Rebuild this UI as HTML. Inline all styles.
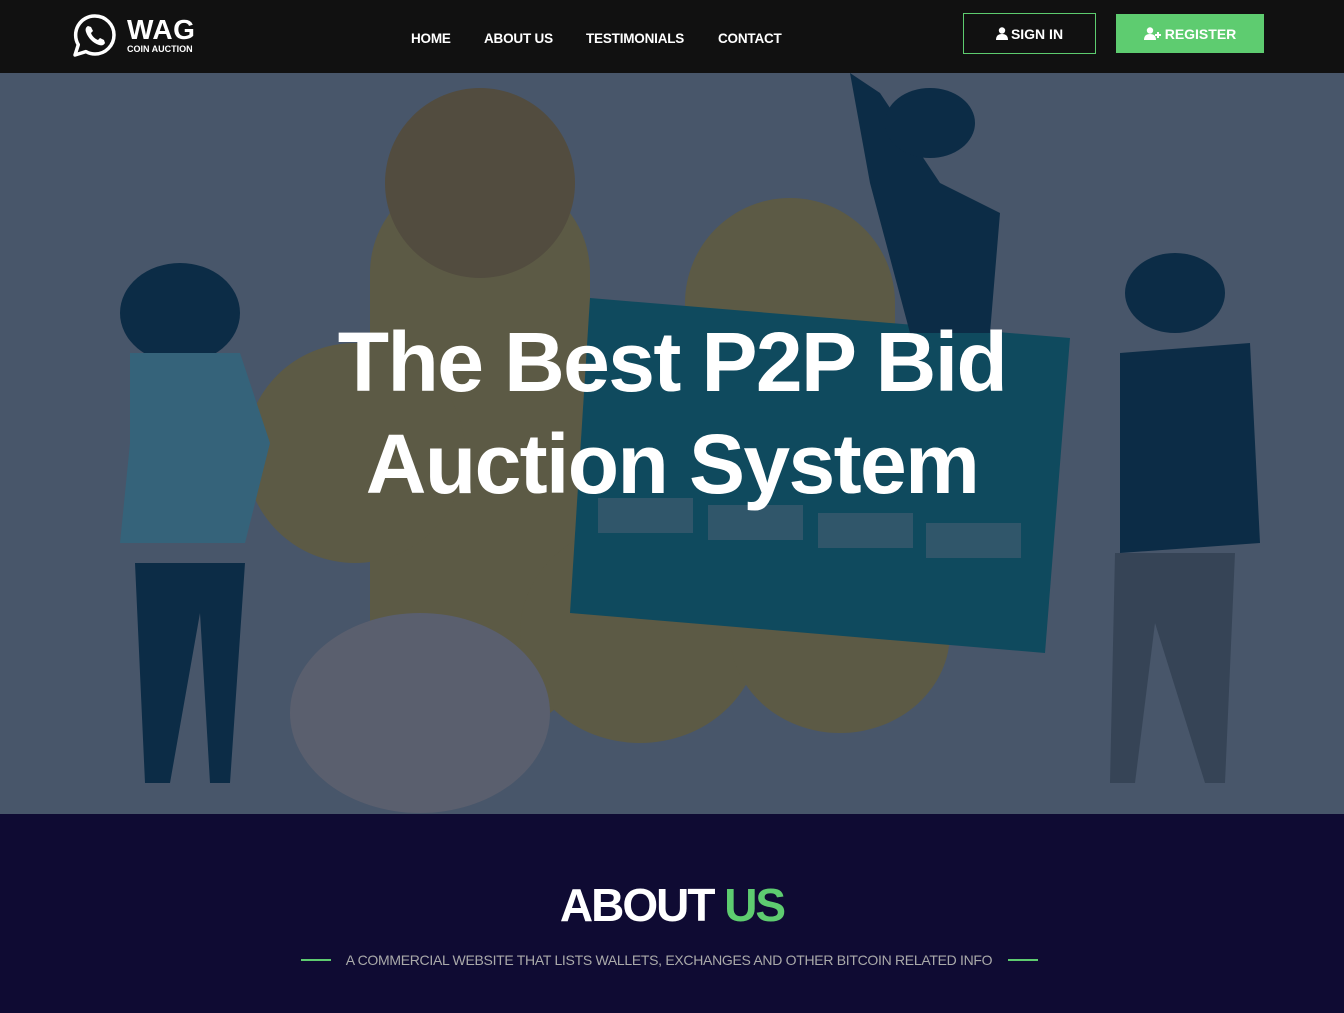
<!DOCTYPE html>
<html><head><meta charset="utf-8"><style>
*{margin:0;padding:0;box-sizing:border-box}
body{width:1344px;height:1013px;overflow:hidden;font-family:"Liberation Sans",sans-serif;background:#0f0b33}
.nav{position:absolute;left:0;top:0;width:1344px;height:73px;background:#111;}
.nav a{position:absolute;top:31px;color:#fff;font-size:13.5px;font-weight:bold;text-decoration:none;letter-spacing:-0.2px}
.btn{position:absolute;top:13px;height:40px;color:#fff;font-size:14px;font-weight:bold;display:flex;align-items:center;justify-content:center;gap:3px}
.hero{position:absolute;top:73px;left:0;width:1344px;height:741px;background:#48566a;overflow:hidden}
.hero h1{position:absolute;left:0;width:1344px;text-align:center;color:#fff;font-size:84px;line-height:102px;top:238px;font-weight:bold;letter-spacing:-1.6px}
.about{position:absolute;top:814px;left:0;width:1344px;height:199px;background:#0f0b33}
</style></head><body>
<div class="nav">
<svg style="position:absolute;left:72px;top:13px" width="46" height="46" viewBox="0 0 46 46"><path d="M23 3a19 19 0 0 1 0 38c-3.5 0-6.5-1-9-2.4L3 42l3.3-10.3A19 19 0 0 1 23 3z" fill="none" stroke="#fff" stroke-width="3.5" stroke-linejoin="round"/><path d="M16 13c-2 1-3 3-2 6 2 6 7 11 13 13 3 1 5 0 6-2l-1-3-4-2-2 2c-3-1-6-4-7-7l2-2-2-4z" fill="#fff"/></svg>
<div style="position:absolute;left:127px;top:15px;color:#fff;font-weight:bold;font-size:28px;line-height:30px;letter-spacing:0.5px">WAG</div>
<div style="position:absolute;left:127px;top:44px;color:#fff;font-weight:bold;font-size:9px">COIN AUCTION</div>
<a style="left:411px">HOME</a><a style="left:484px">ABOUT US</a><a style="left:586px">TESTIMONIALS</a><a style="left:718px">CONTACT</a>
<div class="btn" style="left:963px;width:133px;border:1px solid #5dcc6f;height:41px"><svg width="12" height="13" viewBox="0 0 12 13"><circle cx="6" cy="3.5" r="3.2" fill="#fff"/><path d="M0 13c0-4 2-6 6-6s6 2 6 6z" fill="#fff"/></svg>SIGN IN</div>
<div class="btn" style="left:1116px;width:148px;background:#5ecc70;height:39px;top:14px"><svg width="18" height="13" viewBox="0 0 18 13"><circle cx="6" cy="3.5" r="3.2" fill="#fff"/><path d="M0 13c0-4 2-6 6-6s6 2 6 6z" fill="#fff"/><path d="M14 5v6M11 8h6" stroke="#fff" stroke-width="2"/></svg>REGISTER</div>
</div>
<div class="hero">
<svg width="1344" height="741" style="position:absolute;left:0;top:0">
<g fill="#5c5a45">
<rect x="370" y="100" width="220" height="560" rx="100"/>
<circle cx="790" cy="230" r="105"/><rect x="685" y="230" width="210" height="380"/>
<circle cx="355" cy="380" r="110"/>
<ellipse cx="640" cy="560" rx="120" ry="110"/>
<ellipse cx="840" cy="560" rx="110" ry="100"/>
</g>
<circle cx="480" cy="110" r="95" fill="#524c3f"/>
<polygon points="590,225 1070,265 1045,580 570,540" fill="#0f4a5e"/>
<g fill="#30566a"><rect x="598" y="425" width="95" height="35"/><rect x="708" y="432" width="95" height="35"/><rect x="818" y="440" width="95" height="35"/><rect x="926" y="450" width="95" height="35"/></g>
<ellipse cx="420" cy="640" rx="130" ry="100" fill="#5a5f6e"/>
<g fill="#0c2c46">
<ellipse cx="180" cy="240" rx="60" ry="50"/><path d="M135 490h110l-15 220h-20l-10-170-30 170h-25z"/>
<path d="M850 0l30 20 60 90 60 30-10 120-80 0-40-150z"/>
<ellipse cx="930" cy="50" rx="45" ry="35"/>
<path d="M1120 280l130-10 10 200-140 10z"/><ellipse cx="1175" cy="220" rx="50" ry="40"/>
</g>
<path d="M130 280h110l30 90-25 100H120l10-100z" fill="#35637a"/>
<path d="M1115 480h120l-10 230h-20l-50-160-20 160h-25z" fill="#364456"/>
</svg>
<h1>The Best P2P Bid<br>Auction System</h1>
</div>
<div class="about">
<div style="position:absolute;left:0;width:1344px;text-align:center;top:64px;font-size:46px;font-weight:bold;color:#fff;letter-spacing:-2px">ABOUT <span style="color:#5ecc70">US</span></div>
<div style="position:absolute;left:301px;top:145px;width:30px;height:2px;background:#5ecc70"></div>
<div style="position:absolute;left:1008px;top:145px;width:30px;height:2px;background:#5ecc70"></div>
<div style="position:absolute;left:330px;width:678px;text-align:center;top:138px;font-size:14px;color:#aaa;letter-spacing:-0.3px">A COMMERCIAL WEBSITE THAT LISTS WALLETS, EXCHANGES AND OTHER BITCOIN RELATED INFO</div>
</div>
</body></html>
